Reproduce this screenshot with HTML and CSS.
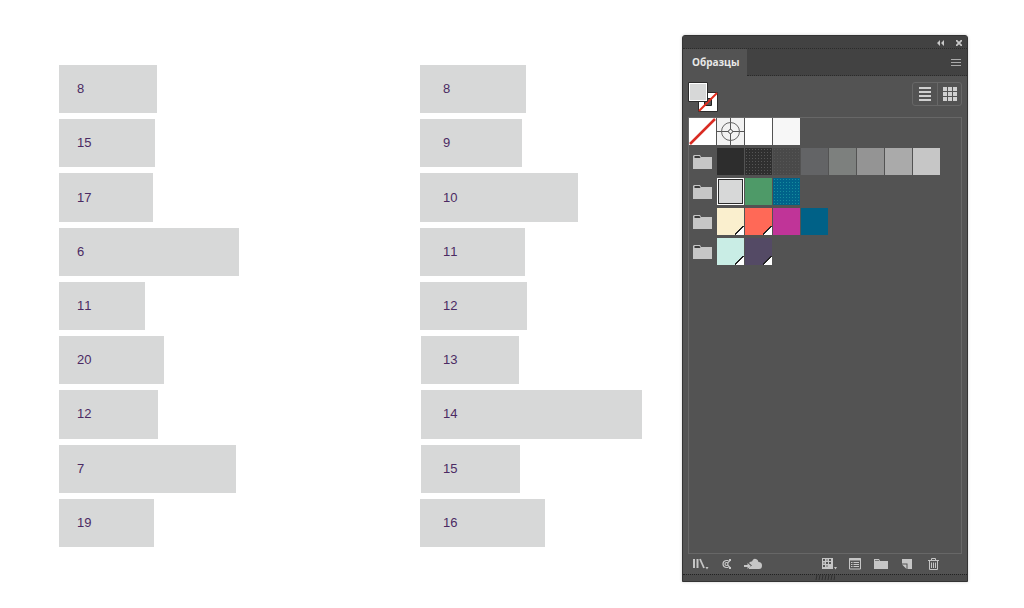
FILE: index.html
```html
<!DOCTYPE html>
<html lang="ru">
<head>
<meta charset="utf-8">
<meta name="viewport" content="width=device-width, initial-scale=1">
<title>Образцы</title>
<link rel="stylesheet" href="styles.css">
</head>
<body>
<svg class="symbols" aria-hidden="true">
  <symbol id="folder" viewBox="0 0 19 14"><path d="M0 1L1 0H7L8 2H19V14H0z" fill="#c6c6c6"/><path d="M1.500 1H6.500L7.500 3H1.500z" fill="#3c3c3c"/></symbol>
</svg>
<main class="page">
  <ol class="chart">
    <li class="bar" style="width:98px">8</li>
    <li class="bar" style="width:96px">15</li>
    <li class="bar" style="width:94px">17</li>
    <li class="bar" style="width:180px">6</li>
    <li class="bar" style="width:86px">11</li>
    <li class="bar" style="width:105px">20</li>
    <li class="bar" style="width:99px">12</li>
    <li class="bar" style="width:177px">7</li>
    <li class="bar" style="width:95px">19</li>
  </ol>
  <ol class="chart chart-wide">
    <li class="bar" style="width:106px">8</li>
    <li class="bar" style="width:102px">9</li>
    <li class="bar" style="width:158px">10</li>
    <li class="bar" style="width:105px">11</li>
    <li class="bar" style="width:107px">12</li>
    <li class="bar shifted" style="width:98px">13</li>
    <li class="bar shifted" style="width:221px">14</li>
    <li class="bar shifted" style="width:99px">15</li>
    <li class="bar" style="width:125px">16</li>
  </ol>
  <section class="panel" aria-label="Образцы">
    <header class="titlebar">
      <button class="icon-button" aria-label="Свернуть"><svg width="8" height="6" viewBox="0 0 8 6"><path d="M3 0V6L0 3zM7 0V6L4 3z" fill="#c8c8c8"/></svg></button>
      <button class="icon-button" aria-label="Закрыть"><svg width="6" height="6" viewBox="0 0 6 6"><path d="M0 0L6 6M6 0L0 6" stroke="#c8c8c8" stroke-width="1.800"/></svg></button>
    </header>
    <div class="tabs">
      <button class="tab">Образцы</button>
      <button class="icon-button menu" aria-label="Меню"><svg width="10" height="7" viewBox="0 0 10 7"><path d="M0 .5H10M0 3.500H10M0 6.500H10" stroke="#aaa"/></svg></button>
    </div>
    <div class="tools">
      <button class="icon-button" aria-label="Заливка и обводка"><svg width="30" height="30" viewBox="0 0 30 30"><path d="M10.500 10.500H29.500V29.500H10.500z" fill="#fff" stroke="#2b2b2b"/><path d="M16.500 16.500H23.500V23.500H16.500z" fill="#555" stroke="#222"/><path d="M11 29L29 11" stroke="#e22b1c" stroke-width="2"/><path d="M.5 .5H19.500V19.500H.5z" fill="#fff" stroke="#2b2b2b"/><path d="M2 2H18V18H2z" fill="#d7d8d8"/></svg></button>
      <div class="views">
        <button class="view" aria-label="Список"><svg width="12" height="14" viewBox="0 0 12 14"><path d="M0 1H12M0 5H12M0 9H12M0 13H12" stroke="#d0d0d0" stroke-width="2"/></svg></button>
        <button class="view" aria-label="Миниатюры"><svg width="14" height="14" viewBox="0 0 14 14"><path d="M0 2H14M0 7H14M0 12H14" stroke="#d0d0d0" stroke-width="4" stroke-dasharray="4 1"/></svg></button>
      </div>
    </div>
    <div class="library">
      <div class="group">
        <button class="swatch" aria-label="Нет"><svg width="27" height="27" viewBox="0 0 27 27"><path d="M0 0H27V27H0z" fill="#fff"/><path d="M1 26L26 1" stroke="#d92b22" stroke-width="2.500"/></svg></button>
        <button class="swatch" aria-label="Совмещение"><svg width="27" height="27" viewBox="0 0 27 27"><path d="M0 0H27V27H0z" fill="#f2f2f2"/><g fill="none" stroke="#555"><path d="M13.500 0V11.500M13.500 15.500V27M0 13.500H11.500M15.500 13.500H27"/><circle cx="13.500" cy="13.500" r="9" stroke="#666"/><circle cx="13.500" cy="13.500" r="2"/></g></svg></button>
        <button class="swatch white" aria-label="Белый"></button>
        <button class="swatch paper" aria-label="Светло-серый"></button>
      </div>
      <div class="group">
        <span class="folder"><svg width="19" height="14"><use href="#folder"/></svg></span>
        <button class="swatch black" aria-label="Чёрный"></button>
        <button class="swatch coal grain" aria-label="Угольный"></button>
        <button class="swatch graphite grain" aria-label="Графит"></button>
        <button class="swatch slate" aria-label="Тёмно-серый"></button>
        <button class="swatch stone" aria-label="Каменный"></button>
        <button class="swatch gray" aria-label="Серый"></button>
        <button class="swatch silver" aria-label="Серебристый"></button>
        <button class="swatch mist" aria-label="Туманный"></button>
      </div>
      <div class="group">
        <span class="folder"><svg width="19" height="14"><use href="#folder"/></svg></span>
        <button class="swatch selected" aria-label="Светлый, выбран"></button>
        <button class="swatch green" aria-label="Зелёный"></button>
        <button class="swatch blue weave" aria-label="Голубой"></button>
      </div>
      <div class="group">
        <span class="folder"><svg width="19" height="14"><use href="#folder"/></svg></span>
        <button class="swatch cream global" aria-label="Кремовый"></button>
        <button class="swatch coral global" aria-label="Коралловый"></button>
        <button class="swatch magenta" aria-label="Пурпурный"></button>
        <button class="swatch ocean" aria-label="Морской"></button>
      </div>
      <div class="group">
        <span class="folder"><svg width="19" height="14"><use href="#folder"/></svg></span>
        <button class="swatch mint global" aria-label="Мятный"></button>
        <button class="swatch plum global" aria-label="Сливовый"></button>
      </div>
    </div>
    <footer class="actions">
      <button class="action" aria-label="Библиотеки"><svg width="16" height="12" viewBox="0 0 16 12"><path d="M1 1V10M4.500 1V10" stroke="#c6c6c6" stroke-width="2"/><path d="M7 1L11 10" stroke="#c6c6c6" stroke-width="1.800"/><path d="M12.500 9H15.500L14 11.500z" fill="#c6c6c6"/></svg></button>
      <button class="action" aria-label="Темы"><svg width="10" height="10" viewBox="0 0 10 10"><g fill="none" stroke="#c6c6c6" stroke-width="1.200"><path d="M6.500 1.500H4Q1 2 1 5T4 8.500H6.500"/><circle cx="4.500" cy="5" r="1.500"/><path d="M5.500 4L8 1.500M5.500 6L8 8.500"/></g><path d="M7 0H9V2H7zM7 8H9V10H7z" fill="#c6c6c6"/></svg></button>
      <button class="action" aria-label="Добавить в библиотеку"><svg width="18" height="12" viewBox="0 0 18 12"><path d="M5 11V9.500L8 7.500L5 5Q6 3 8 3.500Q9 0 12 1Q14 1.500 14.500 4Q18 4 18 7.500T15 11z" fill="#c6c6c6"/><path d="M0 7H3.500V5L7 8L3.500 11V9H0z" fill="#c6c6c6"/></svg></button>
      <span class="spacer"></span>
      <button class="action" aria-label="Показать виды"><svg width="16" height="12" viewBox="0 0 16 12"><path d="M1 0H12V11H1z" fill="#c6c6c6"/><path d="M2 1H4V3H2zM8 1H10V3H8zM5 4H7V6H5zM8 4H10V6H8zM2 7H4V9H2z" fill="#555"/><path d="M5 1H7V3H5zM2 4H4V6H2zM5 7H7V9H5z" fill="#999"/><path d="M13 9H16L14.500 11.500z" fill="#c6c6c6"/></svg></button>
      <button class="action" aria-label="Параметры"><svg width="12" height="12" viewBox="0 0 12 12"><path d="M.5 .5H11.500V11H.5z" fill="none" stroke="#c6c6c6"/><path d="M0 1.500H12" stroke="#c6c6c6" stroke-width="2"/><path d="M2 4.500H3.500M4.500 4.500H10M2 6.500H3.500M4.500 6.500H10M2 8.500H3.500M4.500 8.500H10" stroke="#c6c6c6"/></svg></button>
      <button class="action" aria-label="Новая группа"><svg width="14" height="10" viewBox="0 0 14 10"><path d="M0 0H5L6 2H14V10H0z" fill="#c6c6c6"/><path d="M1 1.500H5" stroke="#777"/></svg></button>
      <button class="action" aria-label="Новый образец"><svg width="10" height="10" viewBox="0 0 10 10"><path d="M0 0H10V10H5.500V4.500H0z" fill="#c6c6c6"/><path d="M0 5.500H4.500V10z" fill="#c6c6c6"/></svg></button>
      <button class="action" aria-label="Удалить"><svg width="11" height="12" viewBox="0 0 11 12"><path d="M0 2.500H11M3.500 2V.5H7.500V2M1.500 3V11.500H9.500V3M3.500 4.500V10M5.500 4.500V10M7.500 4.500V10" fill="none" stroke="#c6c6c6"/></svg></button>
    </footer>
    <div class="grip"><svg width="20" height="5" viewBox="0 0 20 5"><path d="M1 5L2 0M4 5L5 0M7 5L8 0M10 5L11 0M13 5L14 0M16 5L17 0M19 5L20 0" stroke="#303030"/></svg></div>
  </section>
</main>
</body>
</html>
```
FILE: styles.css
```css
* { box-sizing: border-box; }
body { margin: 0; background: #fff; font-family: "Liberation Sans", Arial, sans-serif; }
button { margin: 0; padding: 0; border: 0; background: none; color: inherit; font: inherit; }
svg { display: block; }
.symbols { width: 0; height: 0; position: absolute; }
.page {
  display: grid;
  grid-template-columns: 361fr 262fr 286px;
  min-height: 100vh;
  padding: 0 56px 0 59px;
}
.chart {
  display: flex;
  flex-direction: column;
  gap: 6px;
  margin: 0;
  padding: 65px 0 61px;
  list-style: none;
}
.bar {
  display: flex;
  flex: 1;
  align-items: center;
  min-height: 24px;
  padding-left: 18px;
  background: #d7d8d8;
  color: #4b2a63;
  font-size: 13px;
  font-kerning: none;
  line-height: 16px;
}
.chart-wide .bar { padding-left: 23px; }
.chart-wide .shifted { margin-left: 1px; padding-left: 22px; }
.panel {
  display: flex;
  flex-direction: column;
  margin: 35px 0 26px;
  border: 1px solid #333;
  border-radius: 3px 3px 0 0;
  background: #535353;
  box-shadow: 0 0 3px #ccc;
}
.titlebar {
  display: flex;
  justify-content: flex-end;
  align-items: center;
  gap: 11px;
  height: 13px;
  padding: 1px 5px 0 0;
  border-bottom: 1px dotted #2b2b2b;
  background: #424242;
}
.tabs { display: flex; height: 27px; background: #424242; }
.tab {
  padding: 0 8px 0 9px;
  background: #535353;
  color: #e8e8e8;
  font: 700 10px/27px "Open Sans", "Noto Sans", sans-serif;
}
.menu {
  display: flex;
  flex: 1;
  justify-content: flex-end;
  align-items: center;
  padding-right: 6px;
  border-bottom: 1px dotted #2b2b2b;
}
.tools {
  display: flex;
  justify-content: space-between;
  align-items: flex-start;
  padding: 6px 5px 5px;
}
.views { display: flex; border: 1px solid #676767; border-radius: 3px; }
.view { display: flex; justify-content: center; align-items: center; width: 24px; height: 22px; }
.view + .view { border-left: 1px solid #676767; }
.library {
  display: flex;
  flex: 1;
  flex-direction: column;
  gap: 3px;
  margin: 0 5px;
  border: 1px solid #676767;
}
.group { display: flex; gap: 1px; }
.swatch, .folder { position: relative; width: 27px; height: 27px; }
.folder { display: flex; justify-content: center; align-items: center; }
.white { background: #fff; }
.paper { background: #f7f7f7; }
.black { background: #2d2d2d; }
.coal { background-color: #2f2f2f; }
.graphite { background-color: #494949; }
.grain { background-image: radial-gradient(#555 1px, transparent 1px); background-size: 3px 3px; }
.slate { background: #636466; }
.stone { background: #7d807e; }
.gray { background: #949494; }
.silver { background: #aaa; }
.mist { background: #c6c6c6; }
.selected { border: 1px solid #fff; background: #d7d8d8; box-shadow: inset 0 0 0 1px #2b2b2b; }
.green { background: #4e9a68; }
.blue { background-color: #00638a; }
.weave { background-image: radial-gradient(#168c9d 1px, transparent 1px); background-size: 3px 3px; }
.cream { background: #faefce; }
.coral { background: #ff6957; }
.magenta { background: #c03498; }
.ocean { background: #006187; }
.mint { background: #c9ede5; }
.plum { background: #544a65; }
.global::after {
  content: "";
  position: absolute;
  right: 0;
  bottom: 0;
  width: 9px;
  height: 9px;
  background: linear-gradient(135deg, transparent 42%, #222 42% 51%, #fff 51%);
}
.actions { display: flex; align-items: center; height: 20px; padding: 0 21px 1px 5px; }
.action { display: flex; justify-content: center; align-items: center; width: 26px; height: 18px; }
.spacer { flex: 1; }
.grip {
  display: flex;
  justify-content: center;
  height: 7px;
  border-top: 1px dotted #222;
  background: #4b4b4b;
}
```
